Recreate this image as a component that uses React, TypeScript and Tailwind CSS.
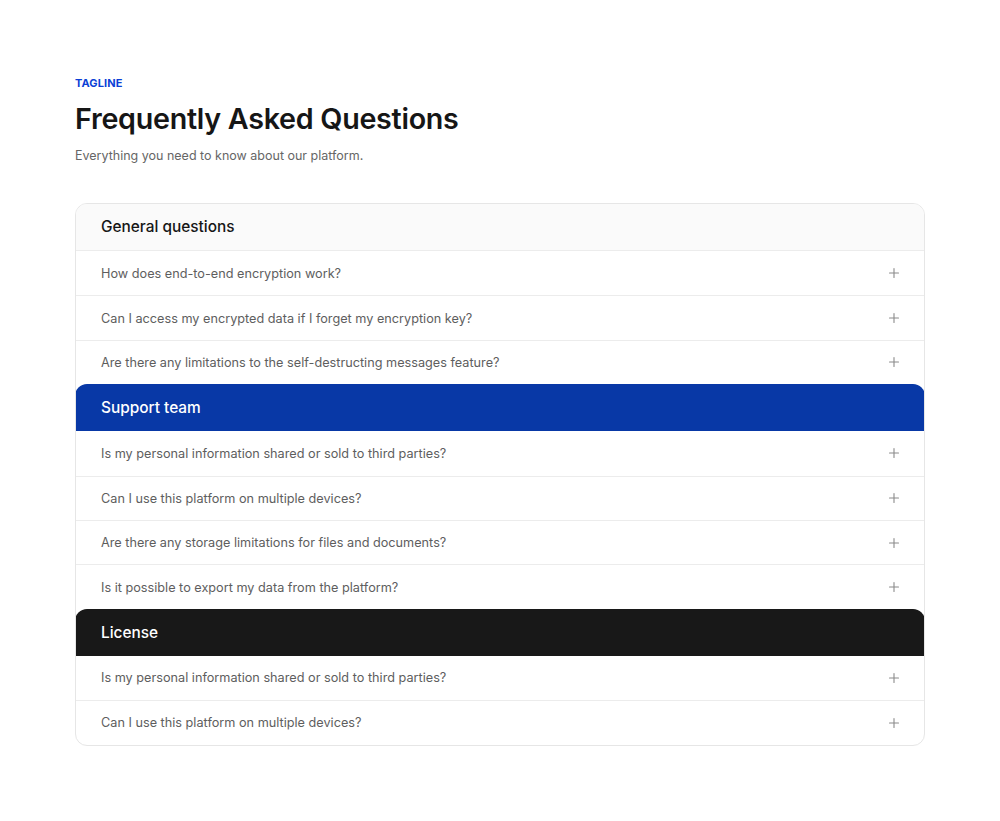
import React from "react";

const sections = [
  {
    title: "General questions",
    variant: "light",
    items: [
      "How does end-to-end encryption work?",
      "Can I access my encrypted data if I forget my encryption key?",
      "Are there any limitations to the self-destructing messages feature?",
    ],
  },
  {
    title: "Support team",
    variant: "blue",
    items: [
      "Is my personal information shared or sold to third parties?",
      "Can I use this platform on multiple devices?",
      "Are there any storage limitations for files and documents?",
      "Is it possible to export my data from the platform?",
    ],
  },
  {
    title: "License",
    variant: "dark",
    items: [
      "Is my personal information shared or sold to third parties?",
      "Can I use this platform on multiple devices?",
    ],
  },
];

function Plus() {
  return (
    <svg width="12" height="12" viewBox="0 0 12 12" fill="none" className="text-[#8a8a8a]">
      <path d="M6 1.5v9M1.5 6h9" stroke="currentColor" strokeWidth="1.1" strokeLinecap="round" />
    </svg>
  );
}

export default function App() {
  return (
    <div className="min-h-[821px] bg-white" style={{ fontFamily: "Inter, 'Noto Sans', sans-serif" }}>
      <div className="px-[75px] pt-[75px]">
        <div className="text-[11px] font-bold tracking-[0.01em] text-[#0b3fd6] leading-[16px]">TAGLINE</div>
        <h1 className="mt-[10px] text-[28.7px] font-semibold text-[#161616] leading-[36px] tracking-[-0.01em]">
          Frequently Asked Questions
        </h1>
        <p className="mt-[9px] text-[12.5px] text-[#666666] leading-[20px]">
          Everything you need to know about our platform.
        </p>

        <div className="mt-[37px] w-[850px] rounded-xl border border-[#e6e6e6] overflow-hidden">
          {sections.map((s, si) => {
            const headerCls =
              s.variant === "light"
                ? "bg-[#fafafa] text-[#161616] border-b border-[#ececec]"
                : s.variant === "blue"
                ? "bg-[#0838a6] text-white rounded-t-xl -mx-px"
                : "bg-[#181818] text-white rounded-t-xl -mx-px";
            return (
              <div key={si}>
                <div className={`h-[47px] flex items-center px-[25px] text-[15.4px] font-medium ${headerCls}`}>
                  <span className={s.variant === "light" ? "" : "pl-px"}>{s.title}</span>
                </div>
                {s.items.map((q, qi) => (
                  <div
                    key={qi}
                    className={`h-[44.4px] flex items-center justify-between px-[25px] text-[12.7px] text-[#5e5e5e] ${
                      qi > 0 ? "border-t border-[#ececec]" : ""
                    }`}
                  >
                    <span>{q}</span>
                    <span className="-mr-[1px]">
                      <Plus />
                    </span>
                  </div>
                ))}
              </div>
            );
          })}
        </div>
      </div>
    </div>
  );
}
